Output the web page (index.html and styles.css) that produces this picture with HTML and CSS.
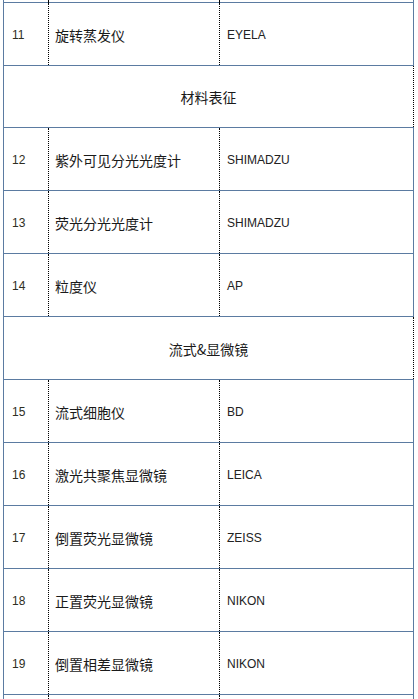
FILE: index.html
```html
<!DOCTYPE html>
<html lang="zh">
<head>
<meta charset="utf-8">
<link rel="stylesheet" href="styles.css">
</head>
<body>
<div class="table">
  <div class="row stub"><div class="c1"></div><div class="c2"></div><div class="c3"></div></div>
  <div class="row"><div class="c1 num">11</div><div class="c2 name">旋转蒸发仪</div><div class="c3 brand">EYELA</div></div>
  <div class="row section first"><div class="head">材料表征</div></div>
  <div class="row"><div class="c1 num">12</div><div class="c2 name">紫外可见分光光度计</div><div class="c3 brand">SHIMADZU</div></div>
  <div class="row"><div class="c1 num">13</div><div class="c2 name">荧光分光光度计</div><div class="c3 brand">SHIMADZU</div></div>
  <div class="row"><div class="c1 num">14</div><div class="c2 name">粒度仪</div><div class="c3 brand">AP</div></div>
  <div class="row section"><div class="head">流式&amp;显微镜</div></div>
  <div class="row"><div class="c1 num">15</div><div class="c2 name">流式细胞仪</div><div class="c3 brand">BD</div></div>
  <div class="row"><div class="c1 num">16</div><div class="c2 name">激光共聚焦显微镜</div><div class="c3 brand">LEICA</div></div>
  <div class="row"><div class="c1 num">17</div><div class="c2 name">倒置荧光显微镜</div><div class="c3 brand">ZEISS</div></div>
  <div class="row"><div class="c1 num">18</div><div class="c2 name">正置荧光显微镜</div><div class="c3 brand">NIKON</div></div>
  <div class="row"><div class="c1 num">19</div><div class="c2 name">倒置相差显微镜</div><div class="c3 brand">NIKON</div></div>
  <div class="row"><div class="c1 num"></div><div class="c2 name"></div><div class="c3 brand"></div></div>
</div>
</body>
</html>
```
FILE: styles.css
```css
html, body {
  margin: 0;
  padding: 0;
  background: #ffffff;
  height: 699px;
  overflow: hidden;
}
.table {
  margin-left: 3px;
  width: 409px;
  border-left: 1px solid #5b7ba1;
  border-right: 1px solid #5b7ba1;
  font-family: "Noto Sans CJK SC", "Liberation Sans", sans-serif;
  color: #1a1a1a;
}
.row {
  display: grid;
  grid-template-columns: 45px 171px 1fr;
  height: 62px;
  border-top: 1px solid #5b7ba1;
}
.row.stub {
  height: 2px;
  border-top: none;
}
.row.section.first {
  height: 61px;
}
.c1, .c2 {
  border-right: 1px dotted #000;
}
.c1, .c2, .c3 {
  display: flex;
  align-items: center;
  padding-top: 2px;
  box-sizing: border-box;
}
.num {
  padding-left: 8px;
  font-family: "Liberation Sans", sans-serif;
  font-size: 12px;
  color: #2e2e22;
}
.name {
  padding-left: 6px;
  font-size: 14px;
}
.brand {
  padding-left: 7px;
  font-family: "Liberation Sans", sans-serif;
  font-size: 12px;
  color: #222;
}
.row.section {
  display: flex;
  margin-right: -1px;
}
.head {
  flex: 1;
  display: flex;
  align-items: center;
  justify-content: center;
  font-size: 14px;
  padding-top: 1px;
  box-sizing: border-box;
  border-right: 1px dotted #000;
  background: #fff;
}
```
